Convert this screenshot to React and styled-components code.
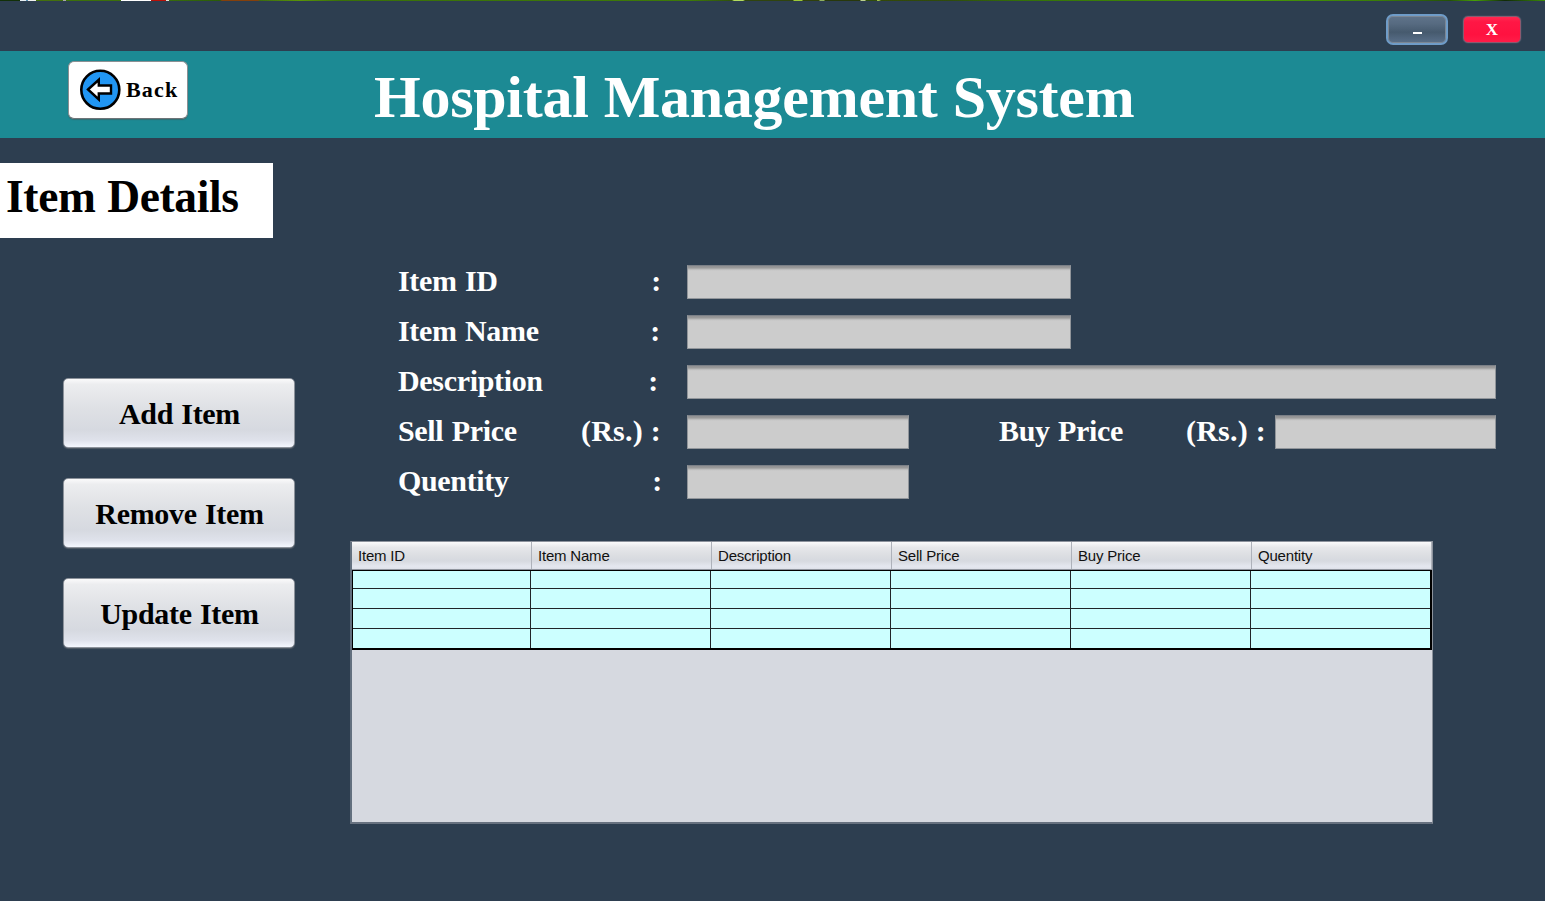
import React from 'react';
import styled, { createGlobalStyle } from 'styled-components';

const Global = createGlobalStyle`
  * { box-sizing: border-box; }
  body { margin: 0; background: #2d3e50; overflow: hidden; }
  button { font: inherit; padding: 0; }
`;

const Window = styled.div`
  width: 1545px;
  height: 901px;
  display: flex;
  flex-direction: column;
  background: #2d3e50;
  font-family: 'Liberation Serif', 'Times New Roman', serif;
  font-weight: bold;
`;

const Backdrop = styled.div`
  height: 1px;
  flex: none;
  background: linear-gradient(to right,
    #123008 0 20px, #e8f0f4 20px 26px, #5a90b0 26px 28px, #f0f0f0 28px 36px,
    #44700e 36px 63px, #a8a8a8 63px 66px, #3c700a 66px 121px, #ffffff 121px 151px,
    #b81008 151px 166px, #e8e0d8 166px 169px, #386c0c 169px, #2a5c08 220px,
    #84400c 222px 258px, #3c6c10 260px, #5a9408 300px, #3a7008 340px,
    #3e7a08 690px, #30500c 732px, #b4dc60 734px 743px, #30440e 745px 793px,
    #9cc838 794px 802px, #30400c 803px 819px, #90b060 820px 824px,
    #28380c 825px 860px, #bcd090 861px 865px, #304c0c 866px 877px,
    #a0c050 877px 879px, #344808 881px, #304c0c 950px, #347008 1020px,
    #489808 1250px, #3a7c08 1380px, #245008 1450px, #48a008 1475px,
    #102808 1505px, #3c8c08 1545px);
`;

const TitleBar = styled.div`
  height: 50px;
  flex: none;
  display: flex;
  justify-content: flex-end;
  align-items: flex-start;
  gap: 15px;
  padding: 13px 24px 0 0;
`;

const WindowButton = styled.button`
  width: ${(p) => (p.$close ? 58 : 62)}px;
  height: ${(p) => (p.$close ? 27 : 31)}px;
  margin-top: ${(p) => (p.$close ? 2 : 0)}px;
  border: ${(p) => (p.$close ? '1px solid #8b5a70' : '2px solid #6f9cc8')};
  border-radius: ${(p) => (p.$close ? 5 : 7)}px;
  background: ${(p) =>
    p.$close
      ? 'linear-gradient(#ff2850, #ff1745 20%, #ff1240 70%, #ff1c48)'
      : 'linear-gradient(#60748b, #566a80 30%, #465a6e 60%, #5a708a)'};
  box-shadow: ${(p) =>
    p.$close ? '0 0 1px #8b98a4' : 'inset 0 0 0 1px #7c8794'};
  color: #fff;
  font-weight: bold;
  font-size: 17px;
  line-height: 25px;
  display: flex;
  align-items: ${(p) => (p.$close ? 'center' : 'flex-start')};
  justify-content: center;
`;

const Minus = styled.span`
  width: 9px;
  height: 2px;
  margin-top: 16px;
  background: #fff;
`;

const Header = styled.header`
  height: 87px;
  flex: none;
  display: flex;
  align-items: flex-start;
  padding: 10px 0 0 68px;
  background: #1c8a94;
`;

const BackButton = styled.button`
  width: 120px;
  height: 58px;
  display: flex;
  align-items: center;
  gap: 5px;
  padding-left: 10px;
  border: 1px solid #8b9093;
  border-bottom-color: #6d7478;
  border-radius: 6px;
  background: #fff;
  box-shadow: 0 1px 1px rgba(80, 80, 80, 0.5);
  color: #000;
  font-weight: bold;
  font-size: 22px;
  letter-spacing: 1.15px;
`;

const Title = styled.h1`
  margin: 2px 0 0 186px;
  color: #fff;
  font-size: 60px;
  line-height: 69px;
  letter-spacing: -0.27px;
  word-spacing: 0.4px;
  white-space: nowrap;
`;

const Body = styled.main`
  display: flex;
  padding-top: 25px;
`;

const Sidebar = styled.aside`
  width: 350px;
  flex: none;
`;

const SectionTitle = styled.h2`
  width: 273px;
  height: 75px;
  margin: 0 0 140px;
  padding: 7px 0 0 6px;
  background: #fff;
  color: #000;
  font-size: 45.5px;
  line-height: 53px;
  letter-spacing: -0.35px;
  word-spacing: 0.6px;
`;

const Actions = styled.div`
  display: flex;
  flex-direction: column;
  gap: 30px;
  padding-left: 63px;
`;

const ActionButton = styled.button`
  width: 232px;
  height: 70px;
  padding: 2px 0 0 1px;
  border: 1px solid #8c929b;
  border-radius: 5px;
  background: linear-gradient(#fafafb, #ecedef 8%, #dfe1e5 42%, #d6d9e0 75%, #dfe2eb 90%, #f4f7fe);
  box-shadow: 0 1px 1px rgba(110, 115, 122, 0.6);
  color: #000;
  font-weight: bold;
  font-size: 30px;
  letter-spacing: -0.3px;
  word-spacing: 1px;
`;

const Content = styled.section`
  display: flex;
  flex-direction: column;
`;

const Form = styled.div`
  display: flex;
  flex-direction: column;
  gap: 16px;
  padding: 102px 0 0 48px;
`;

const FormRow = styled.div`
  display: flex;
  height: 34px;
`;

const Label = styled.label`
  width: ${(p) => p.$width || 289}px;
  margin-left: ${(p) => p.$offset || 0}px;
  padding-right: ${(p) => p.$end}px;
  display: flex;
  justify-content: space-between;
  color: #fff;
  font-size: 30px;
  line-height: 32px;
  letter-spacing: -0.33px;
  word-spacing: 1.2px;
  white-space: pre;
`;

const Unit = styled.span`
  letter-spacing: 0.25px;
  word-spacing: 0;
`;

const Field = styled.input`
  width: ${(p) => p.$width}px;
  height: 34px;
  padding: 0 6px;
  border: 1px solid #91959a;
  border-top-color: #7b8087;
  border-radius: 0;
  outline: none;
  background: linear-gradient(#919193 0, #9b9b9b 2px, #b5b5b5 3px, #c5c5c5 4px, #cccccc 5px);
`;

const TablePane = styled.div`
  width: 1083px;
  height: 283px;
  margin-top: 42px;
  border: 1px solid #8c929c;
  border-left: 2px solid #626f7e;
  border-bottom: 2px solid #67717f;
  background: #d6d9e0;
`;

const Table = styled.div`
  display: flex;
  flex-direction: column;
`;

const HeadRow = styled.div`
  height: 28px;
  display: grid;
  grid-template-columns: repeat(6, 180px);
  border-bottom: 1px solid #90959e;
  background: linear-gradient(#fafafb, #e6e7ea 20%, #dcdee2 50%, #d6d9df 70%, #e4e7ef 90%, #dfe2ea);
`;

const HeadCell = styled.div`
  padding-left: 6px;
  border-right: 1px solid #aeb2ba;
  color: #111;
  font: 15px/27px 'Liberation Sans', Arial, sans-serif;
  letter-spacing: -0.2px;
`;

const Rows = styled.div`
  width: 1080px;
  border: 1px solid #000;
  border-right-width: 2px;
  border-bottom-width: 2px;
  background: #ccffff;
`;

const Row = styled.div`
  height: ${(p) => (p.$first ? 18 : p.$last ? 19 : 20)}px;
  display: grid;
  grid-template-columns: 178px repeat(5, 180px);
  border-bottom: ${(p) => (p.$last ? 0 : '1px solid #202428')};
`;

const Cell = styled.div`
  border-right: ${(p) => (p.$last ? 0 : '1px solid #202428')};
`;

const columns = ['Item ID', 'Item Name', 'Description', 'Sell Price', 'Buy Price', 'Quentity'];

const BackIcon = () => (
  <svg width="42" height="42" viewBox="0 0 42 42">
    <circle cx="21.3" cy="20.8" r="19" fill="#2196f3" stroke="#000" strokeWidth="2.6" />
    <path
      d="M9 20.5 19.8 10.8V16.5H32V24.5H19.8V30.5Z"
      fill="#fff"
      stroke="#000"
      strokeWidth="2.4"
    />
  </svg>
);

export default function App() {
  return (
    <>
      <Global />
      <Window>
        <Backdrop />
        <TitleBar>
          <WindowButton aria-label="Minimize"><Minus /></WindowButton>
          <WindowButton $close>X</WindowButton>
        </TitleBar>
        <Header>
          <BackButton><BackIcon />Back</BackButton>
          <Title>Hospital Management System</Title>
        </Header>
        <Body>
          <Sidebar>
            <SectionTitle>Item Details</SectionTitle>
            <Actions>
              <ActionButton>Add Item</ActionButton>
              <ActionButton>Remove Item</ActionButton>
              <ActionButton>Update Item</ActionButton>
            </Actions>
          </Sidebar>
          <Content>
            <Form>
              <FormRow>
                <Label $end={26}><span>Item ID</span><span>:</span></Label>
                <Field $width={384} />
              </FormRow>
              <FormRow>
                <Label $end={27}><span>Item Name</span><span>:</span></Label>
                <Field $width={384} />
              </FormRow>
              <FormRow>
                <Label $end={29}><span>Description</span><span>:</span></Label>
                <Field $width={809} />
              </FormRow>
              <FormRow>
                <Label $end={26}><span>Sell Price</span><Unit>(Rs.) :</Unit></Label>
                <Field $width={222} />
                <Label $width={276} $offset={90} $end={9}><span>Buy Price</span><Unit>(Rs.) :</Unit></Label>
                <Field $width={221} />
              </FormRow>
              <FormRow>
                <Label $end={25}><span>Quentity</span><span>:</span></Label>
                <Field $width={222} />
              </FormRow>
            </Form>
            <TablePane>
              <Table>
                <HeadRow>
                  {columns.map((name) => (
                    <HeadCell key={name}>{name}</HeadCell>
                  ))}
                </HeadRow>
                <Rows>
                  {[0, 1, 2, 3].map((r) => (
                    <Row key={r} $first={r === 0} $last={r === 3}>
                      {columns.map((name, i) => (
                        <Cell key={name} $last={i === 5} />
                      ))}
                    </Row>
                  ))}
                </Rows>
              </Table>
            </TablePane>
          </Content>
        </Body>
      </Window>
    </>
  );
}
